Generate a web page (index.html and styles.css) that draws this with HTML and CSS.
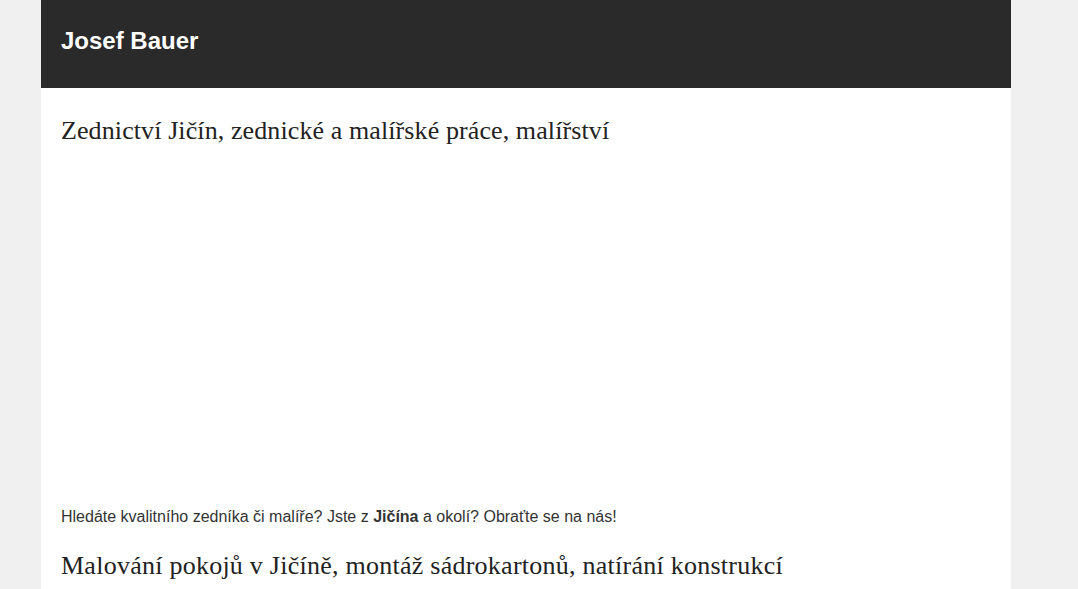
FILE: index.html
```html
<!DOCTYPE html>
<html lang="cs">

<head>
    <meta charset="UTF-8">
    <meta name="viewport" content="width=device-width, initial-scale=1.0">
    <title>Josef Bauer</title>
    <link rel="stylesheet" href="styles.css">
</head>

<body>
    <div class="page">
        <header class="site-header">
            <div class="site-title">Josef Bauer</div>
        </header>

        <main class="content">
            <h1>Zednictví Jičín, zednické a malířské práce, malířství</h1>

            <div class="video"></div>

            <p>Hledáte kvalitního zedníka či malíře? Jste z <strong>Jičína</strong> a okolí? Obraťte se na nás!</p>

            <h2>Malování pokojů v Jičíně, montáž sádrokartonů, natírání konstrukcí</h2>
        </main>
    </div>
</body>

</html>
```

FILE: styles.css
```css
html {
    font-family: "Liberation Sans", Arial, Helvetica, sans-serif;
    font-size: 16px;
}

body {
    margin: 0;
    background: #f0f0f0;
    color: #333;
}

.page {
    width: 970px;
    margin-left: 41px;
    min-height: 100vh;
    background: #fff;
}

.site-header {
    height: 88px;
    background: #2a2a2a;
    padding: 0 20px;
    display: flex;
    align-items: center;
}

.site-title {
    color: #fff;
    font-weight: bold;
    font-size: 24px;
    margin-top: -6px;
}

.content {
    padding: 0 20px;
}

h1,
h2 {
    font-family: "Liberation Serif", "Times New Roman", serif;
    font-weight: normal;
    font-size: 26px;
    color: #222;
    margin: 0;
}

h1 {
    padding-top: 28px;
    letter-spacing: 0.1px;
}

/* empty embed area */
.video {
    height: 362px;
}

p {
    margin: 0;
    line-height: 18px;
}

h2 {
    margin-top: 25px;
    letter-spacing: 0.25px;
}
```
